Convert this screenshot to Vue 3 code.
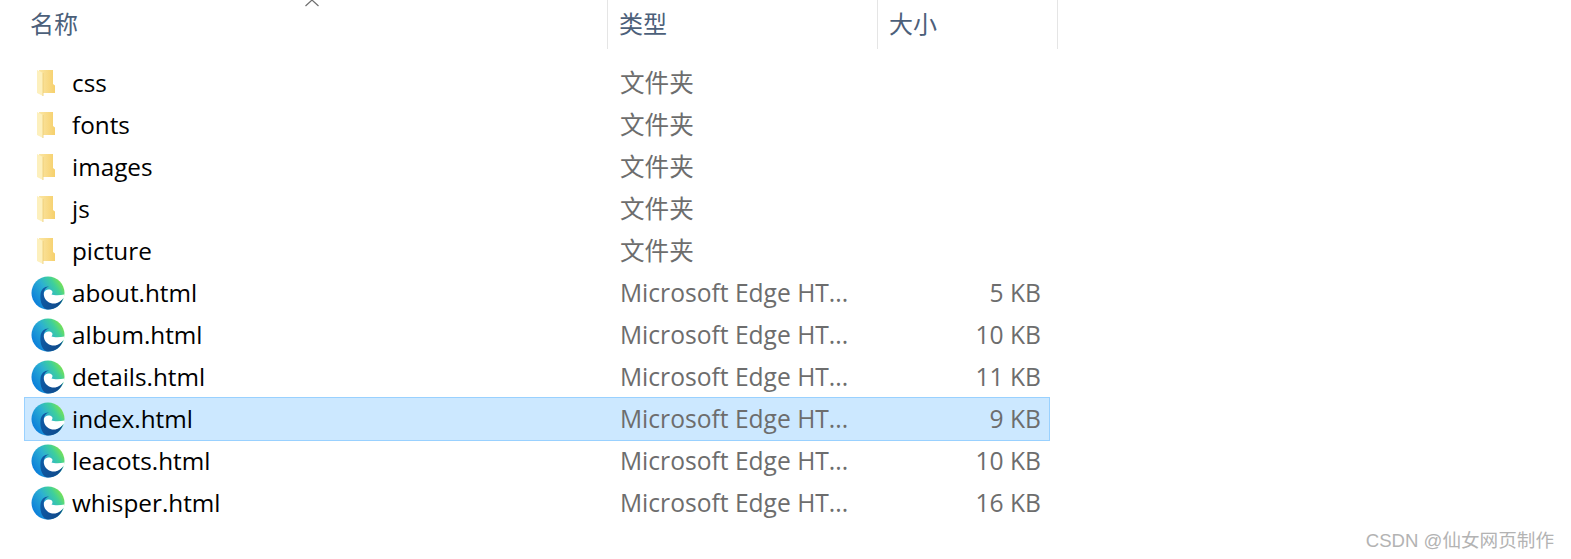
<script setup>
const files = [
  { name: 'css', type: '文件夹', folder: true },
  { name: 'fonts', type: '文件夹', folder: true },
  { name: 'images', type: '文件夹', folder: true },
  { name: 'js', type: '文件夹', folder: true },
  { name: 'picture', type: '文件夹', folder: true },
  { name: 'about.html', type: 'Microsoft Edge HT...', size: '5 KB' },
  { name: 'album.html', type: 'Microsoft Edge HT...', size: '10 KB' },
  { name: 'details.html', type: 'Microsoft Edge HT...', size: '11 KB' },
  { name: 'index.html', type: 'Microsoft Edge HT...', size: '9 KB', selected: true },
  { name: 'leacots.html', type: 'Microsoft Edge HT...', size: '10 KB' },
  { name: 'whisper.html', type: 'Microsoft Edge HT...', size: '16 KB' }
]
</script>

<template>
  <div class="page">
    <svg class="sort" width="16" height="7" viewBox="0 0 16 7">
      <path d="M1.5 6 L8 0 L14.5 6" fill="none" stroke="#6f6f6f" stroke-width="1.2" />
    </svg>

    <div class="header">
      <div class="col-name">名称</div>
      <div class="col-type">类型</div>
      <div class="col-size">大小</div>
    </div>

    <div class="list">
      <div v-for="f in files" :key="f.name" class="row" :class="{ selected: f.selected }">
        <div class="icon">
          <svg v-if="f.folder" class="folder" width="18" height="26" viewBox="0 0 18 26">
            <defs>
              <linearGradient :id="'fold-' + f.name" x1="0" y1="0" x2="1" y2="0">
                <stop offset="0" stop-color="#fbe6a4" />
                <stop offset="1" stop-color="#f6d06c" />
              </linearGradient>
            </defs>
            <path d="M2 0 H16 V14 L18 15.5 V23 H2 Z" :fill="'url(#fold-' + f.name + ')'" />
            <path d="M0 0 L6 3 V26 L0 23 Z" fill="#fdf0bd" />
            <path d="M6 3 V26" stroke="#eccb72" stroke-width="0.8" />
          </svg>
          <svg v-else width="34" height="34" viewBox="0 0 34 34">
            <defs>
              <linearGradient :id="'edge-' + f.name" x1="0.05" y1="0.75" x2="0.9" y2="0.2">
                <stop offset="0" stop-color="#0b7ddb" />
                <stop offset="0.5" stop-color="#2cb0d2" />
                <stop offset="0.8" stop-color="#3fd09a" />
                <stop offset="1" stop-color="#74e05a" />
              </linearGradient>
              <linearGradient :id="'edgeb-' + f.name" x1="0" y1="0" x2="1" y2="0.3">
                <stop offset="0" stop-color="#0e5ca8" />
                <stop offset="1" stop-color="#114a8b" />
              </linearGradient>
            </defs>
            <circle cx="17" cy="17" r="16.5" :fill="'url(#edge-' + f.name + ')'" />
            <path d="M33.5 18.5 C29 19.5 23 19.5 20.5 18.5 C23 15.5 20.5 13 17 13.5 C12.5 14.2 11 20 13.5 24 C16 28 22 29.5 27 27 C29.5 25.5 31.5 23.5 33.5 21 Z" fill="#fff" />
            <path d="M9.5 18 C10 13 14 10 18 10.5 C14 11.5 12 15.5 13 20 C14.5 26 21 29 26 27 C28.5 26 30.5 24.5 32 22.5 C30 29 24.5 33.5 17 33.5 C12 33.5 8.5 26 9.5 18 Z" :fill="'url(#edgeb-' + f.name + ')'" />
          </svg>
        </div>
        <div class="name">{{ f.name }}</div>
        <div class="type">{{ f.type }}</div>
        <div class="size">{{ f.size }}</div>
      </div>
    </div>

    <div class="mark">CSDN @仙女网页制作</div>
  </div>
</template>

<style scoped>
.page {
  position: relative;
  width: 1571px;
  height: 559px;
  overflow: hidden;
  background: #fff;
  font-family: "Open Sans", "Noto Sans CJK SC", sans-serif;
  font-size: 24.3px;
}
.sort {
  position: absolute;
  left: 304px;
  top: 0;
}
.header {
  display: flex;
  width: 1058px;
  height: 49px;
  color: #4c607a;
  line-height: 46px;
  font-size: 24px;
  font-family: "Noto Sans CJK SC", sans-serif;
}
.col-name {
  width: 608px;
  padding-left: 30px;
  box-sizing: border-box;
  border-right: 1px solid #e5e5e5;
}
.col-type {
  width: 270px;
  padding-left: 11px;
  box-sizing: border-box;
  border-right: 1px solid #e5e5e5;
}
.col-size {
  width: 180px;
  padding-left: 11px;
  box-sizing: border-box;
  border-right: 1px solid #e5e5e5;
}
.list {
  margin-top: 13px;
  margin-left: 25px;
  width: 1024px;
}
.row {
  display: flex;
  align-items: center;
  height: 42px;
  line-height: 40px;
}
.row.selected {
  background: #cce8ff;
  outline: 1px solid #99d1ff;
}
.icon {
  width: 47px;
  height: 42px;
  display: flex;
  align-items: center;
  padding-left: 6px;
  box-sizing: border-box;
}
.folder {
  margin-left: 6px;
}
.name {
  width: 548px;
  color: #000;
}
.type {
  width: 301px;
  color: #6d6d6d;
  font-size: 24.6px;
}
.size {
  width: 120px;
  text-align: right;
  color: #6d6d6d;
  font-size: 24.6px;
}
.mark {
  position: absolute;
  right: 17px;
  top: 528px;
  font-family: "Liberation Sans", "Noto Sans CJK SC", sans-serif;
  font-size: 18.6px;
  line-height: 26px;
  color: #b3b3b3;
}
</style>
